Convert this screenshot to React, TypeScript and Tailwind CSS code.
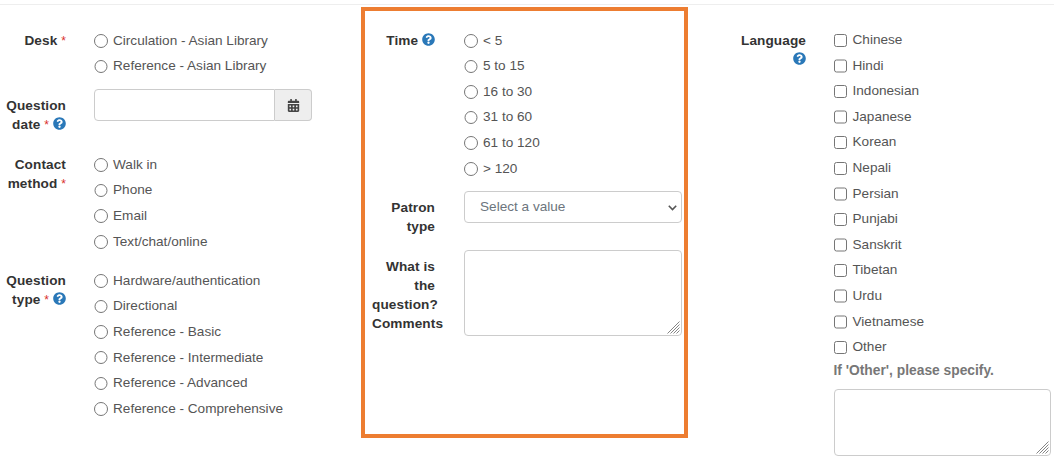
import { FaCalendarAlt, FaQuestionCircle } from "react-icons/fa";

const Help = ({ className = "" }: { className?: string }) => (
  <FaQuestionCircle className={`inline-block text-[13px] text-[#2a78b8] align-[-1px] ${className}`} />
);

const Req = () => <span className="text-[12px] font-normal text-[#d9302c]">*</span>;

const Options = ({ type, items }: { type: "radio" | "checkbox"; items: string[] }) => (
  <div>
    {items.map((item) => (
      <label key={item} className="flex h-[25.6px] items-center text-[#555]">
        <input type={type} name={type === "radio" ? items[0] : undefined} className="m-0 mr-[5.5px] h-[13.5px] w-[13.5px]" />
        {item}
      </label>
    ))}
  </div>
);

const Label = ({ width, className = "", children }: { width: string; className?: string; children: React.ReactNode }) => (
  <div className={`${width} shrink-0 pt-[3px] text-right font-bold leading-[19px] tracking-[0.1px] text-[#333] ${className}`}>{children}</div>
);

// textarea with the larger hatched resize grip from the picture
const Area = ({ className }: { className: string }) => (
  <div className={`relative ${className}`}>
    <textarea className="block h-full w-full resize-none rounded-[4px] border border-[#cccccc] bg-white" />
    <svg className="absolute right-[2px] bottom-[2px] h-[13px] w-[13px]" viewBox="0 0 13 13" stroke="#777" strokeWidth="0.9" fill="none">
      <path d="M0.5 12.5 12.5 0.5M3.5 12.5 12.5 3.5M6.5 12.5 12.5 6.5M9.5 12.5 12.5 9.5" />
    </svg>
  </div>
);

const App = () => {
  return (
    <div className="h-[459px] w-[1054px] overflow-hidden bg-white font-['Liberation_Sans',sans-serif] text-[13.6px]">
      <div className="mt-[4px] h-px bg-[#eeeeee]" />
      <div className="flex">
        {/* left column */}
        <div className="w-[361px] shrink-0 pt-[23px] pl-[5px]">
          <div className="mb-[10px] flex gap-[28px]">
            <Label width="w-[61px]">
              Desk <Req />
            </Label>
            <Options type="radio" items={["Circulation - Asian Library", "Reference - Asian Library"]} />
          </div>
          <div className="mb-[17px] flex gap-[28px]">
            <Label width="w-[61px]" className="pt-[7px]">
              Question date <Req /> <Help />
            </Label>
            <div className="flex h-[32px] w-[218px]">
              <input type="text" className="min-w-0 flex-1 rounded-l-[4px] border border-[#cccccc] bg-white" />
              <div className="flex w-[37px] items-center justify-center rounded-r-[4px] border border-l-0 border-[#cccccc] bg-[#eeeeee]">
                <FaCalendarAlt className="text-[13px] text-[#444]" />
              </div>
            </div>
          </div>
          <div className="mb-[13.6px] flex gap-[28px]">
            <Label width="w-[61px]">
              Contact method <Req />
            </Label>
            <Options type="radio" items={["Walk in", "Phone", "Email", "Text/chat/online"]} />
          </div>
          <div className="flex gap-[28px]">
            <Label width="w-[61px]">
              Question type <Req /> <Help />
            </Label>
            <Options
              type="radio"
              items={[
                "Hardware/authentication",
                "Directional",
                "Reference - Basic",
                "Reference - Intermediate",
                "Reference - Advanced",
                "Reference - Comprehensive",
              ]}
            />
          </div>
        </div>

        {/* highlighted column */}
        <div className="mt-[2px] h-[431px] w-[327px] shrink-0 border-4 border-[#ed7d31] pt-[17px] pl-[7px]">
          <div className="mb-[9px] flex gap-[29px]">
            <Label width="w-[63px]">
              Time <Help />
            </Label>
            <Options type="radio" items={["< 5", "5 to 15", "16 to 30", "31 to 60", "61 to 120", "> 120"]} />
          </div>
          <div className="mb-[14px] flex gap-[29px]">
            <Label width="w-[63px]" className="pt-[7px]">
              Patron type
            </Label>
            <div className="relative h-[32px] w-[218px]">
              <select className="h-full w-full appearance-none rounded-[4px] border border-[#cccccc] bg-white px-[15px] pt-[2px] text-[#6c757d]">
                <option>Select a value</option>
              </select>
              <svg className="absolute top-[14px] right-[5px] h-[6px] w-[9px]" viewBox="0 0 9 6" fill="none" stroke="#555" strokeWidth="1.6">
                <path d="M0.8 0.8 4.5 4.5 8.2 0.8" />
              </svg>
            </div>
          </div>
          <div className="flex gap-[29px]">
            <Label width="w-[63px]" className="pt-[7px]">
              What is the question? Comments
            </Label>
            <Area className="h-[86px] w-[218px]" />
          </div>
        </div>

        {/* right column */}
        <div className="flex flex-1 gap-[27.5px] pt-[22.5px] pl-[53px]">
          <Label width="w-[65px]">
            Language <Help />
          </Label>
          <div className="w-[217.5px] shrink-0">
            <Options
              type="checkbox"
              items={[
                "Chinese",
                "Hindi",
                "Indonesian",
                "Japanese",
                "Korean",
                "Nepali",
                "Persian",
                "Punjabi",
                "Sanskrit",
                "Tibetan",
                "Urdu",
                "Vietnamese",
                "Other",
              ]}
            />
            <div className="mt-[1px] mb-[9px] text-[13.8px] leading-[19px] font-bold text-[#777]">If 'Other', please specify.</div>
            <Area className="h-[67px] w-[217.5px]" />
          </div>
        </div>
      </div>
    </div>
  );
};

export default App;
